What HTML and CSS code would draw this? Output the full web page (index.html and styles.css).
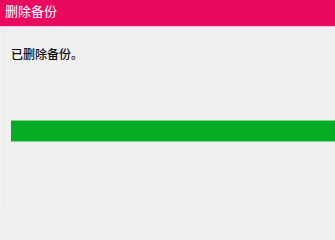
FILE: index.html
```html
<!DOCTYPE html>
<html lang="zh">
<head>
<meta charset="utf-8">
<title>删除备份</title>
<link rel="stylesheet" href="styles.css">
</head>
<body>
<div class="window">
  <div class="titlebar">删除备份</div>
  <div class="content">
    <div class="frame">
      <p class="message">已删除备份。</p>
      <div class="progress"><div class="progress-fill"></div></div>
    </div>
  </div>
</div>
</body>
</html>
```
FILE: styles.css
```css
html, body {
  margin: 0;
  padding: 0;
  background: #f0f0f0;
  height: 210px;
  overflow: hidden;
}
.window {
  width: 335px;
  height: 210px;
  overflow: hidden;
  font-family: "Noto Sans CJK SC", "Noto Sans", sans-serif;
}
.titlebar {
  height: 27px;
  box-sizing: border-box;
  background: #e90a60;
  color: #ffffff;
  font-size: 13px;
  line-height: 22px;
  padding-left: 5px;
  border-bottom: 1px solid #f7c4d9;
}
.content {
  height: 183px;
  padding-left: 3px;
}
.frame {
  height: 100%;
  border-left: 1px solid #eae8ea;
  padding-left: 7px;
  padding-top: 18px;
  box-sizing: border-box;
}
.message {
  margin: 0;
  font-size: 12px;
  line-height: 18px;
  color: #111111;
  font-weight: 500;
}
.progress {
  margin-top: 57px;
  width: 340px;
  height: 22px;
  background: #06ab26;
  border-top: 1px solid #7fd18f;
  border-bottom: 1px solid #7fd18f;
  box-sizing: border-box;
}
```
